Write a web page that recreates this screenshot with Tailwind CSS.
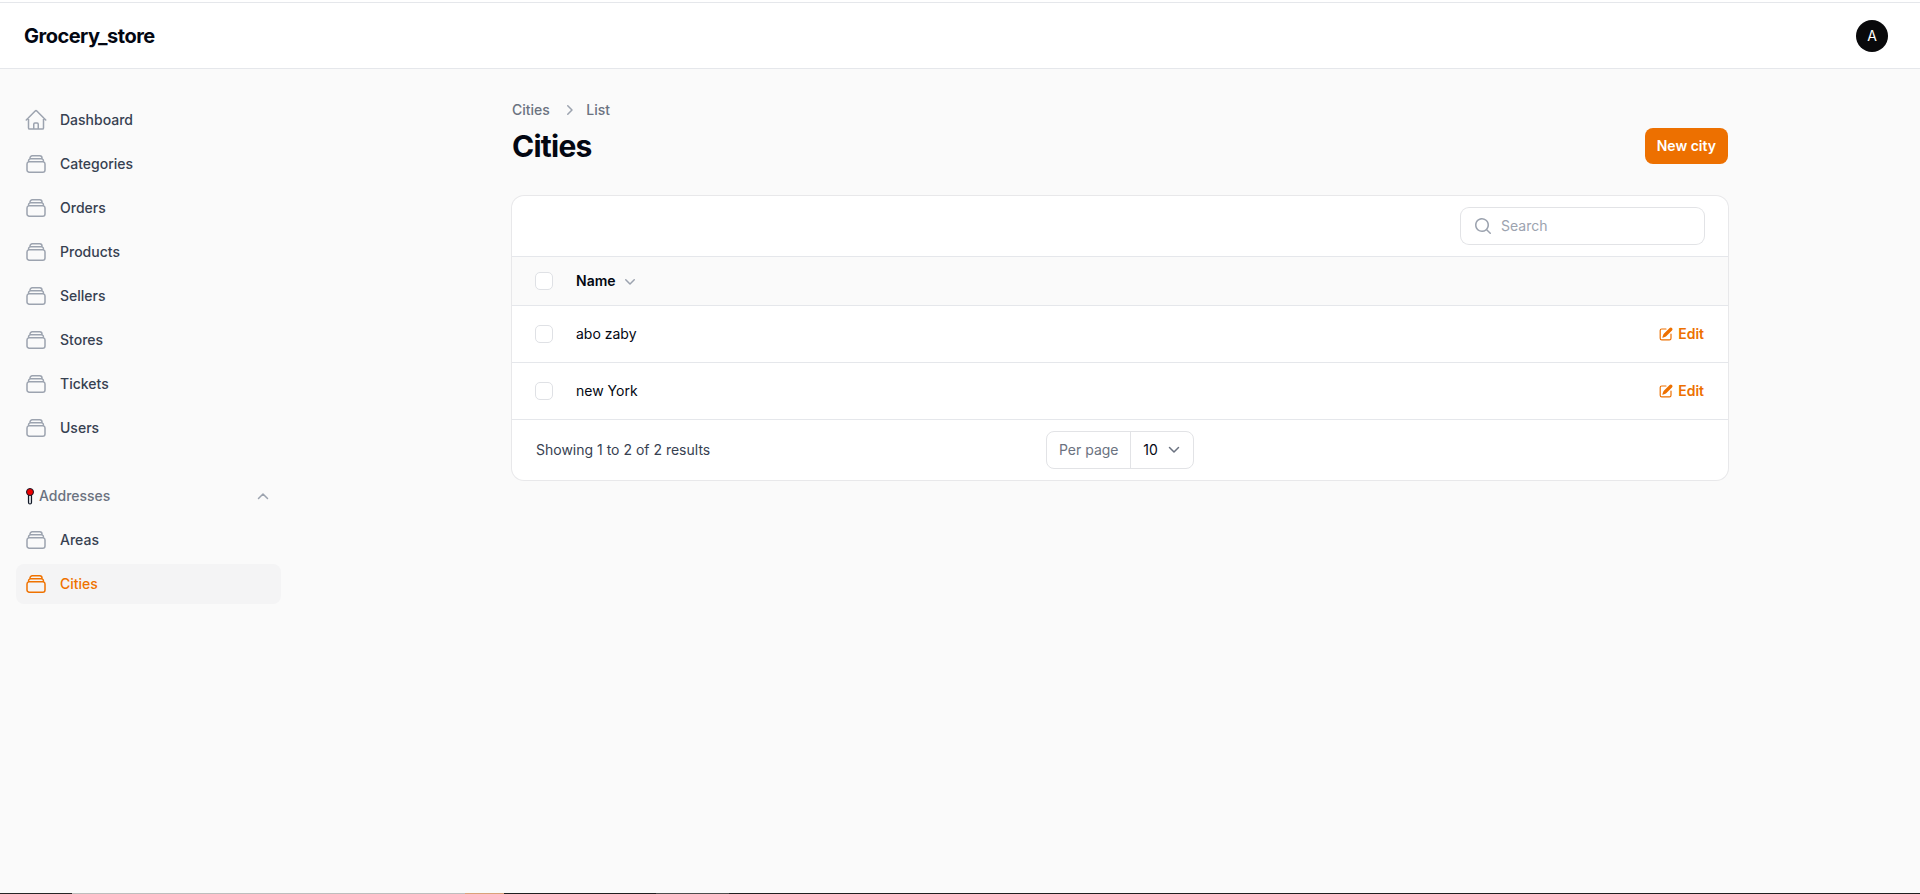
<!DOCTYPE html>
<html>
<head>
<meta charset="utf-8" />
<title>Cities - Grocery_store</title>
<script src="https://cdn.jsdelivr.net/npm/@tailwindcss/browser@4"></script>
</head>
<body class="h-[894px] overflow-hidden flex flex-col bg-[#fafafa] text-[#030712] font-['Inter',sans-serif]">
  <!-- topbar -->
  <div class="h-[3px] shrink-0 bg-white border-b border-[#e5e7eb]"></div>
  <header class="h-[66px] shrink-0 bg-white border-b border-[#e5e7eb] flex items-center justify-between pl-6 pr-8">
    <div class="text-xl font-bold tracking-tight leading-5">Grocery_store</div>
    <div class="w-8 h-8 rounded-full bg-[#09090b] text-white text-sm font-normal flex items-center justify-center">A</div>
  </header>

  <div class="flex-1 flex min-h-0">
    <!-- sidebar -->
    <aside class="w-[320px] shrink-0 pl-4 pr-[39px] pt-[31px]">
      <nav class="flex flex-col gap-1 text-sm font-medium text-[#374151]">
        <a class="flex items-center gap-3 h-10 px-2">
          <svg class="w-6 h-6 text-[#9ca3af]" fill="none" viewBox="0 0 24 24" stroke-width="1.5" stroke="currentColor"><path stroke-linecap="round" stroke-linejoin="round" d="m2.25 12 8.954-8.955c.44-.439 1.152-.439 1.591 0L21.75 12M4.5 9.75v10.125c0 .621.504 1.125 1.125 1.125H9.75v-4.875c0-.621.504-1.125 1.125-1.125h2.25c.621 0 1.125.504 1.125 1.125V21h4.125c.621 0 1.125-.504 1.125-1.125V9.75M8.25 21h8.25"/></svg>
          Dashboard
        </a>
        <a class="flex items-center gap-3 h-10 px-2">
          <svg class="w-6 h-6 text-[#9ca3af]" fill="none" viewBox="0 0 24 24" stroke-width="1.5" stroke="currentColor"><path stroke-linecap="round" stroke-linejoin="round" d="M6 6.878V6a2.25 2.25 0 0 1 2.25-2.25h7.5A2.25 2.25 0 0 1 18 6v.878m-12 0c.235-.083.487-.128.75-.128h10.5c.263 0 .515.045.75.128m-12 0A2.25 2.25 0 0 0 4.5 9v.878m13.5-3A2.25 2.25 0 0 1 19.5 9v.878m0 0a2.246 2.246 0 0 0-.75-.128H5.25c-.263 0-.515.045-.75.128m15 0A2.25 2.25 0 0 1 21 12v6a2.25 2.25 0 0 1-2.25 2.25H5.25A2.25 2.25 0 0 1 3 18v-6c0-.98.626-1.813 1.5-2.122"/></svg>
          Categories
        </a>
        <a class="flex items-center gap-3 h-10 px-2">
          <svg class="w-6 h-6 text-[#9ca3af]" fill="none" viewBox="0 0 24 24" stroke-width="1.5" stroke="currentColor"><path stroke-linecap="round" stroke-linejoin="round" d="M6 6.878V6a2.25 2.25 0 0 1 2.25-2.25h7.5A2.25 2.25 0 0 1 18 6v.878m-12 0c.235-.083.487-.128.75-.128h10.5c.263 0 .515.045.75.128m-12 0A2.25 2.25 0 0 0 4.5 9v.878m13.5-3A2.25 2.25 0 0 1 19.5 9v.878m0 0a2.246 2.246 0 0 0-.75-.128H5.25c-.263 0-.515.045-.75.128m15 0A2.25 2.25 0 0 1 21 12v6a2.25 2.25 0 0 1-2.25 2.25H5.25A2.25 2.25 0 0 1 3 18v-6c0-.98.626-1.813 1.5-2.122"/></svg>
          Orders
        </a>
        <a class="flex items-center gap-3 h-10 px-2">
          <svg class="w-6 h-6 text-[#9ca3af]" fill="none" viewBox="0 0 24 24" stroke-width="1.5" stroke="currentColor"><path stroke-linecap="round" stroke-linejoin="round" d="M6 6.878V6a2.25 2.25 0 0 1 2.25-2.25h7.5A2.25 2.25 0 0 1 18 6v.878m-12 0c.235-.083.487-.128.75-.128h10.5c.263 0 .515.045.75.128m-12 0A2.25 2.25 0 0 0 4.5 9v.878m13.5-3A2.25 2.25 0 0 1 19.5 9v.878m0 0a2.246 2.246 0 0 0-.75-.128H5.25c-.263 0-.515.045-.75.128m15 0A2.25 2.25 0 0 1 21 12v6a2.25 2.25 0 0 1-2.25 2.25H5.25A2.25 2.25 0 0 1 3 18v-6c0-.98.626-1.813 1.5-2.122"/></svg>
          Products
        </a>
        <a class="flex items-center gap-3 h-10 px-2">
          <svg class="w-6 h-6 text-[#9ca3af]" fill="none" viewBox="0 0 24 24" stroke-width="1.5" stroke="currentColor"><path stroke-linecap="round" stroke-linejoin="round" d="M6 6.878V6a2.25 2.25 0 0 1 2.25-2.25h7.5A2.25 2.25 0 0 1 18 6v.878m-12 0c.235-.083.487-.128.75-.128h10.5c.263 0 .515.045.75.128m-12 0A2.25 2.25 0 0 0 4.5 9v.878m13.5-3A2.25 2.25 0 0 1 19.5 9v.878m0 0a2.246 2.246 0 0 0-.75-.128H5.25c-.263 0-.515.045-.75.128m15 0A2.25 2.25 0 0 1 21 12v6a2.25 2.25 0 0 1-2.25 2.25H5.25A2.25 2.25 0 0 1 3 18v-6c0-.98.626-1.813 1.5-2.122"/></svg>
          Sellers
        </a>
        <a class="flex items-center gap-3 h-10 px-2">
          <svg class="w-6 h-6 text-[#9ca3af]" fill="none" viewBox="0 0 24 24" stroke-width="1.5" stroke="currentColor"><path stroke-linecap="round" stroke-linejoin="round" d="M6 6.878V6a2.25 2.25 0 0 1 2.25-2.25h7.5A2.25 2.25 0 0 1 18 6v.878m-12 0c.235-.083.487-.128.75-.128h10.5c.263 0 .515.045.75.128m-12 0A2.25 2.25 0 0 0 4.5 9v.878m13.5-3A2.25 2.25 0 0 1 19.5 9v.878m0 0a2.246 2.246 0 0 0-.75-.128H5.25c-.263 0-.515.045-.75.128m15 0A2.25 2.25 0 0 1 21 12v6a2.25 2.25 0 0 1-2.25 2.25H5.25A2.25 2.25 0 0 1 3 18v-6c0-.98.626-1.813 1.5-2.122"/></svg>
          Stores
        </a>
        <a class="flex items-center gap-3 h-10 px-2">
          <svg class="w-6 h-6 text-[#9ca3af]" fill="none" viewBox="0 0 24 24" stroke-width="1.5" stroke="currentColor"><path stroke-linecap="round" stroke-linejoin="round" d="M6 6.878V6a2.25 2.25 0 0 1 2.25-2.25h7.5A2.25 2.25 0 0 1 18 6v.878m-12 0c.235-.083.487-.128.75-.128h10.5c.263 0 .515.045.75.128m-12 0A2.25 2.25 0 0 0 4.5 9v.878m13.5-3A2.25 2.25 0 0 1 19.5 9v.878m0 0a2.246 2.246 0 0 0-.75-.128H5.25c-.263 0-.515.045-.75.128m15 0A2.25 2.25 0 0 1 21 12v6a2.25 2.25 0 0 1-2.25 2.25H5.25A2.25 2.25 0 0 1 3 18v-6c0-.98.626-1.813 1.5-2.122"/></svg>
          Tickets
        </a>
        <a class="flex items-center gap-3 h-10 px-2">
          <svg class="w-6 h-6 text-[#9ca3af]" fill="none" viewBox="0 0 24 24" stroke-width="1.5" stroke="currentColor"><path stroke-linecap="round" stroke-linejoin="round" d="M6 6.878V6a2.25 2.25 0 0 1 2.25-2.25h7.5A2.25 2.25 0 0 1 18 6v.878m-12 0c.235-.083.487-.128.75-.128h10.5c.263 0 .515.045.75.128m-12 0A2.25 2.25 0 0 0 4.5 9v.878m13.5-3A2.25 2.25 0 0 1 19.5 9v.878m0 0a2.246 2.246 0 0 0-.75-.128H5.25c-.263 0-.515.045-.75.128m15 0A2.25 2.25 0 0 1 21 12v6a2.25 2.25 0 0 1-2.25 2.25H5.25A2.25 2.25 0 0 1 3 18v-6c0-.98.626-1.813 1.5-2.122"/></svg>
          Users
        </a>

        <!-- Addresses group -->
        <div class="flex items-center h-10 mt-6 px-2 text-[#6b7280]">
          <svg class="w-3 h-[18px] shrink-0" viewBox="0 0 12 18"><rect x="4.5" y="7" width="3" height="10" rx="1.5" fill="#e5e7eb" stroke="#111827" stroke-width="1.2"/><circle cx="6" cy="5" r="3.5" fill="#ef0000" stroke="#111827" stroke-width="1"/></svg>
          <span class="ml-[3px] flex-1">Addresses</span>
          <svg class="w-5 h-5 text-[#9ca3af]" viewBox="0 0 20 20" fill="none" stroke="currentColor" stroke-width="1.5"><path stroke-linecap="round" stroke-linejoin="round" d="m5.5 12.5 4.5-4.5 4.5 4.5"/></svg>
        </div>
        <a class="flex items-center gap-3 h-10 px-2">
          <svg class="w-6 h-6 text-[#9ca3af]" fill="none" viewBox="0 0 24 24" stroke-width="1.5" stroke="currentColor"><path stroke-linecap="round" stroke-linejoin="round" d="M6 6.878V6a2.25 2.25 0 0 1 2.25-2.25h7.5A2.25 2.25 0 0 1 18 6v.878m-12 0c.235-.083.487-.128.75-.128h10.5c.263 0 .515.045.75.128m-12 0A2.25 2.25 0 0 0 4.5 9v.878m13.5-3A2.25 2.25 0 0 1 19.5 9v.878m0 0a2.246 2.246 0 0 0-.75-.128H5.25c-.263 0-.515.045-.75.128m15 0A2.25 2.25 0 0 1 21 12v6a2.25 2.25 0 0 1-2.25 2.25H5.25A2.25 2.25 0 0 1 3 18v-6c0-.98.626-1.813 1.5-2.122"/></svg>
          Areas
        </a>
        <a class="flex items-center gap-3 h-10 px-2 rounded-lg bg-[#f4f4f5] text-[#ef7200]">
          <svg class="w-6 h-6" fill="none" viewBox="0 0 24 24" stroke-width="1.5" stroke="currentColor"><path stroke-linecap="round" stroke-linejoin="round" d="M6 6.878V6a2.25 2.25 0 0 1 2.25-2.25h7.5A2.25 2.25 0 0 1 18 6v.878m-12 0c.235-.083.487-.128.75-.128h10.5c.263 0 .515.045.75.128m-12 0A2.25 2.25 0 0 0 4.5 9v.878m13.5-3A2.25 2.25 0 0 1 19.5 9v.878m0 0a2.246 2.246 0 0 0-.75-.128H5.25c-.263 0-.515.045-.75.128m15 0A2.25 2.25 0 0 1 21 12v6a2.25 2.25 0 0 1-2.25 2.25H5.25A2.25 2.25 0 0 1 3 18v-6c0-.98.626-1.813 1.5-2.122"/></svg>
          Cities
        </a>
      </nav>
    </aside>

    <!-- main -->
    <main class="flex-1 min-w-0 px-[192px] pt-[31px]">
      <div class="flex items-end justify-between">
        <div>
          <div class="flex items-center gap-2 text-sm font-medium text-[#6b7280] leading-5">
            <span>Cities</span>
            <svg class="w-5 h-5 ml-[1.5px] -mr-px text-[#9ca3af]" viewBox="0 0 20 20" fill="currentColor"><path fill-rule="evenodd" d="M8.22 5.22a.75.75 0 0 1 1.06 0l4.25 4.25a.75.75 0 0 1 0 1.06l-4.25 4.25a.75.75 0 0 1-1.06-1.06L11.94 10 8.22 6.28a.75.75 0 0 1 0-1.06Z" clip-rule="evenodd"/></svg>
            <span>List</span>
          </div>
          <h1 class="mt-2 text-3xl font-bold tracking-tight leading-9">Cities</h1>
        </div>
        <button class="h-9 px-3 rounded-lg bg-[#ed7000] text-white text-sm font-semibold">New city</button>
      </div>

      <section class="mt-8 bg-white rounded-xl ring-1 ring-[#e8e8ea] overflow-hidden">
        <div class="h-[60px] flex items-center justify-end px-6">
          <div class="w-[243px] h-9 rounded-lg ring-1 ring-[#e2e3e6] flex items-center gap-2 pl-3">
            <svg class="w-5 h-5 text-[#9ca3af]" viewBox="0 0 20 20" fill="currentColor"><path fill-rule="evenodd" d="M9 3.5a5.5 5.5 0 1 0 0 11 5.5 5.5 0 0 0 0-11ZM2 9a7 7 0 1 1 12.452 4.391l3.328 3.329a.75.75 0 1 1-1.06 1.06l-3.329-3.328A7 7 0 0 1 2 9Z" clip-rule="evenodd"/></svg>
            <span class="text-sm text-[#9ca3af]">Search</span>
          </div>
        </div>
        <div class="h-[50px] flex items-center gap-[23px] pl-[23px] pr-6 bg-[#fafafa] border-y border-[#e5e7eb]">
          <span class="w-[18px] h-[18px] rounded-[5px] border border-[#dfe1e5] bg-white"></span>
          <span class="text-sm font-semibold">Name</span>
          <svg class="w-5 h-5 -ml-[19px] text-[#9ca3af]" viewBox="0 0 20 20" fill="currentColor"><path fill-rule="evenodd" d="M5.22 8.22a.75.75 0 0 1 1.06 0L10 11.94l3.72-3.72a.75.75 0 1 1 1.06 1.06l-4.25 4.25a.75.75 0 0 1-1.06 0L5.22 9.28a.75.75 0 0 1 0-1.06Z" clip-rule="evenodd"/></svg>
        </div>
        <div class="h-[57px] flex items-center gap-[23px] pl-[23px] pr-6 border-b border-[#e5e7eb]">
          <span class="w-[18px] h-[18px] rounded-[5px] border border-[#dfe1e5] bg-white"></span>
          <span class="text-sm flex-1">abo zaby</span>
          <span class="flex items-center gap-1 text-sm font-semibold text-[#ed7000]">
            <svg class="w-4 h-4" viewBox="0 0 20 20" fill="currentColor"><path d="m5.433 13.917 1.262-3.155A4 4 0 0 1 7.58 9.42l6.92-6.918a2.121 2.121 0 0 1 3 3l-6.92 6.918c-.383.383-.84.685-1.343.886l-3.154 1.262a.5.5 0 0 1-.65-.65Z"/><path d="M3.5 5.75c0-.69.56-1.25 1.25-1.25H10A.75.75 0 0 0 10 3H4.75A2.75 2.75 0 0 0 2 5.75v9.5A2.75 2.75 0 0 0 4.75 18h9.5A2.75 2.75 0 0 0 17 15.25V10a.75.75 0 0 0-1.5 0v5.25c0 .69-.56 1.25-1.25 1.25h-9.5c-.69 0-1.25-.56-1.25-1.25v-9.5Z"/></svg>
            Edit
          </span>
        </div>
        <div class="h-[57px] flex items-center gap-[23px] pl-[23px] pr-6 border-b border-[#e5e7eb]">
          <span class="w-[18px] h-[18px] rounded-[5px] border border-[#dfe1e5] bg-white"></span>
          <span class="text-sm flex-1">new York</span>
          <span class="flex items-center gap-1 text-sm font-semibold text-[#ed7000]">
            <svg class="w-4 h-4" viewBox="0 0 20 20" fill="currentColor"><path d="m5.433 13.917 1.262-3.155A4 4 0 0 1 7.58 9.42l6.92-6.918a2.121 2.121 0 0 1 3 3l-6.92 6.918c-.383.383-.84.685-1.343.886l-3.154 1.262a.5.5 0 0 1-.65-.65Z"/><path d="M3.5 5.75c0-.69.56-1.25 1.25-1.25H10A.75.75 0 0 0 10 3H4.75A2.75 2.75 0 0 0 2 5.75v9.5A2.75 2.75 0 0 0 4.75 18h9.5A2.75 2.75 0 0 0 17 15.25V10a.75.75 0 0 0-1.5 0v5.25c0 .69-.56 1.25-1.25 1.25h-9.5c-.69 0-1.25-.56-1.25-1.25v-9.5Z"/></svg>
            Edit
          </span>
        </div>
        <div class="h-[60px] grid grid-cols-3 items-center px-6">
          <span class="text-sm text-[#374151]">Showing 1 to 2 of 2 results</span>
          <div class="justify-self-center flex items-center h-[38px] rounded-lg border border-[#e2e3e6] text-sm">
            <span class="w-[83px] text-center text-[#6b7280]">Per page</span>
            <span class="h-full border-l border-[#e2e3e6] flex items-center pl-3 pr-[9px] gap-[6px]">10
              <svg class="w-5 h-5 text-[#6b7280]" viewBox="0 0 20 20" fill="none" stroke="currentColor" stroke-width="1.5"><path stroke-linecap="round" stroke-linejoin="round" d="m5.5 7.5 4.5 4.5 4.5-4.5"/></svg>
            </span>
          </div>
        </div>
      </section>
    </main>
  </div>

  <!-- edge of the window behind -->
  <div class="h-px shrink-0 flex bg-[#1f1f1f]">
    <span class="w-[72px] bg-[#262626]"></span>
    <span class="w-[393px] bg-[#bdbdbd]"></span>
    <span class="w-[39px] bg-[#d9a27a]"></span>
    <span class="w-[152px]"></span>
    <span class="w-[73px] bg-[#4d4d4d]"></span>
  </div>
</body>
</html>
